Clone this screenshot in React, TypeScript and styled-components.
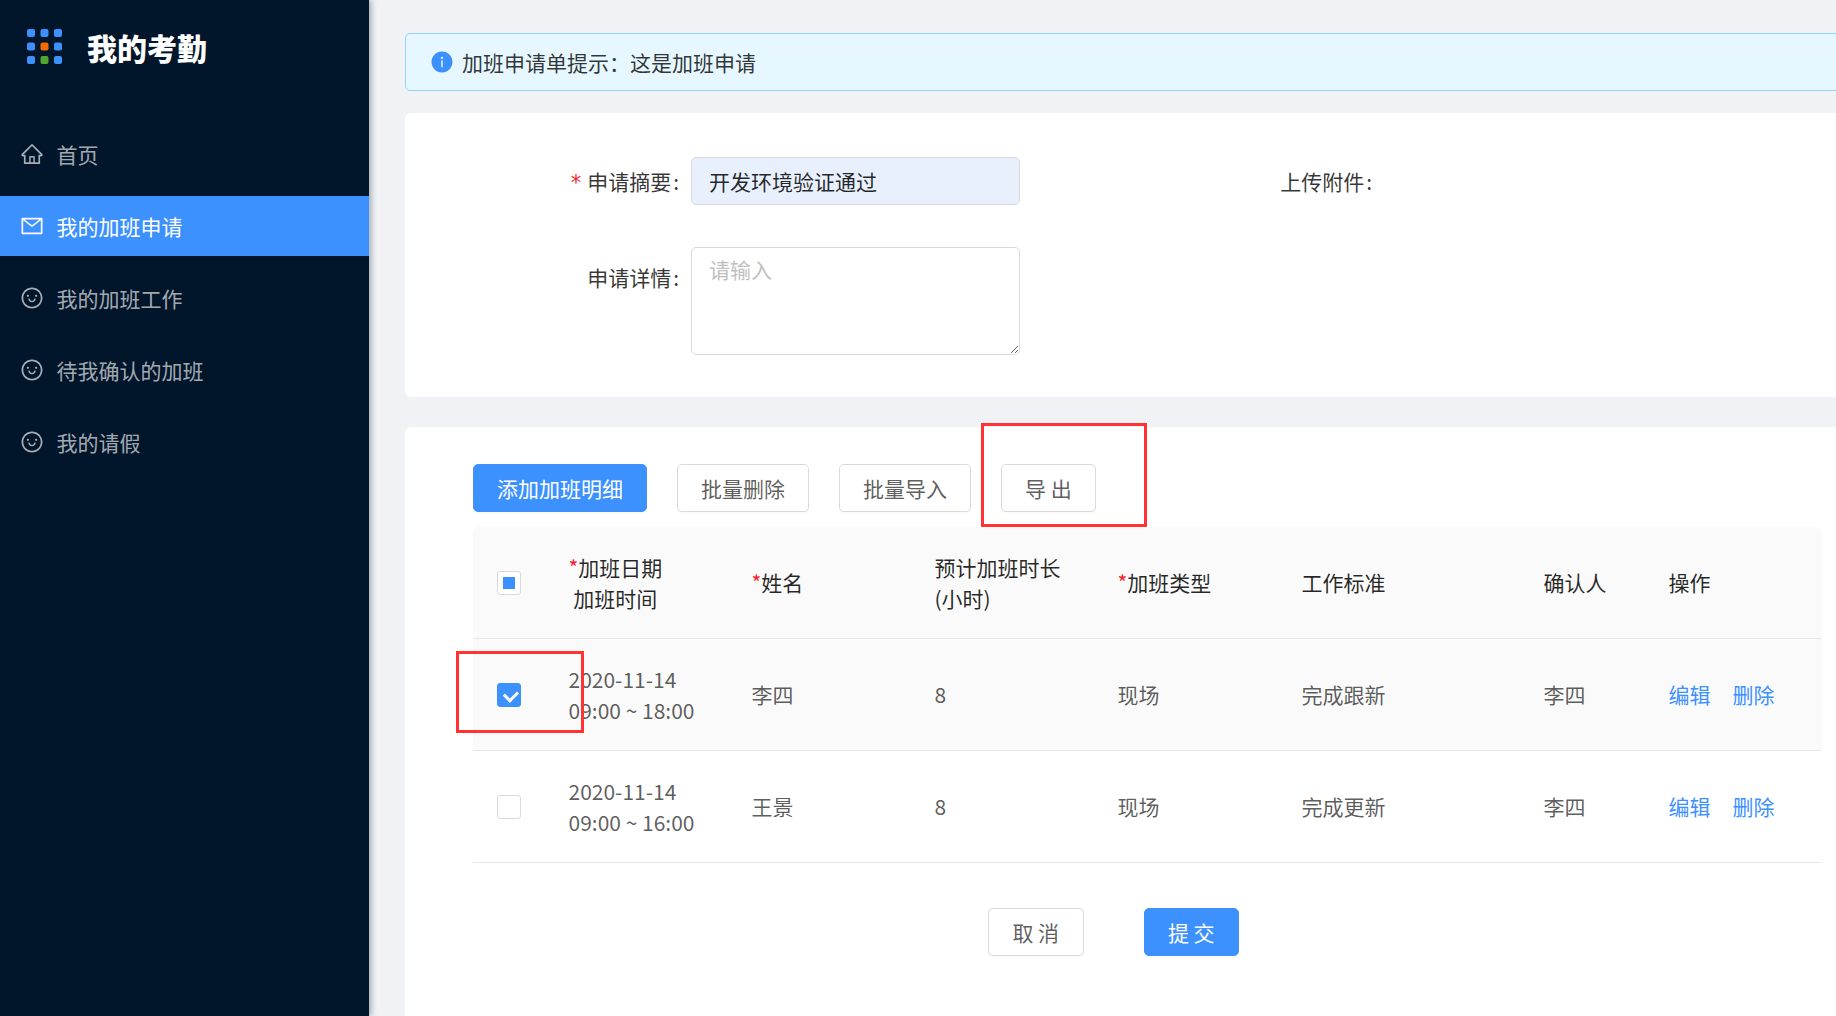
import React from 'react'
import styled, { createGlobalStyle } from 'styled-components'
import { AiOutlineHome, AiOutlineMail, AiOutlineSmile, AiFillInfoCircle } from 'react-icons/ai'

const BLUE = '#3d91ff'

const GlobalStyle = createGlobalStyle`
  html, body {
    margin: 0;
    padding: 0;
    width: 1836px;
    height: 1016px;
    overflow: hidden;
  }
  body {
    font-family: "Noto Sans CJK SC", "Noto Sans", sans-serif;
    font-size: 21px;
    color: rgba(0, 0, 0, 0.65);
  }
  * {
    box-sizing: border-box;
  }
`

const Page = styled.div`
  display: flex;
  width: 1836px;
  height: 1016px;
  overflow: hidden;
  background: #f0f2f5;
`

const Sidebar = styled.aside`
  flex: none;
  width: 369px;
  background: #01152b;
  box-shadow: 2px 0 6px rgba(0, 21, 41, 0.35);
  position: relative;
  z-index: 2;
`

const Brand = styled.div`
  display: flex;
  align-items: center;
  height: 94px;
  padding-left: 27px;
  gap: 24px;
`

const BrandTitle = styled.h1`
  margin: 0;
  font-size: 30px;
  font-weight: 900;
  color: #fff;
  line-height: 40px;
`

const Menu = styled.nav`
  display: flex;
  flex-direction: column;
  gap: 12px;
  margin-top: 30px;
`

const MenuItem = styled.a<{ $active?: boolean }>`
  display: flex;
  align-items: center;
  gap: 13px;
  height: 60px;
  padding-left: 19.5px;
  font-size: 21px;
  color: ${(p) => (p.$active ? '#fff' : 'rgba(255, 255, 255, 0.65)')};
  background: ${(p) => (p.$active ? BLUE : 'transparent')};
`

const Main = styled.main`
  flex: none;
  width: 1520px;
  padding: 33px 0 0 36px;
`

const Alert = styled.div`
  display: flex;
  align-items: center;
  gap: 8px;
  height: 58px;
  padding-left: 24px;
  background: #e6f7ff;
  border: 1px solid #91d5ff;
  border-radius: 5px;
  color: rgba(0, 0, 0, 0.8);
  svg {
    color: ${BLUE};
  }
`

const FormCard = styled.section`
  height: 284px;
  margin-top: 22px;
  padding-top: 44px;
  background: #fff;
  border-radius: 6px;
`

const FormRow = styled.div<{ $gap?: number }>`
  display: flex;
  margin-top: ${(p) => p.$gap ?? 0}px;
`

const Label = styled.label<{ $width: number; $offset?: number }>`
  flex: none;
  width: ${(p) => p.$width}px;
  height: 48px;
  margin-top: ${(p) => p.$offset ?? 0}px;
  padding-right: 12px;
  text-align: right;
  line-height: 48px;
  color: rgba(0, 0, 0, 0.8);
`

const Colon = styled.span`
  margin-left: 2px;
`

const RequiredMark = styled.span`
  margin-right: 6px;
  font-family: "DejaVu Sans", sans-serif;
  line-height: 0;
  color: #f5222d;
`

const TextInput = styled.input`
  flex: none;
  width: 329px;
  height: 48px;
  padding: 0 17px;
  background: #e8f0fe;
  border: 1px solid #d9d9d9;
  border-radius: 5px;
  font: inherit;
  color: rgba(0, 0, 0, 0.85);
  outline: none;
`

const TextArea = styled.textarea`
  flex: none;
  display: block;
  width: 329px;
  height: 108px;
  padding: 6px 17px;
  background: #fff;
  border: 1px solid #d9d9d9;
  border-radius: 5px;
  font: inherit;
  line-height: 31px;
  outline: none;
  &::placeholder {
    color: #bfbfbf;
  }
`

const TableCard = styled.section`
  position: relative;
  min-height: 620px;
  margin-top: 30px;
  padding: 37px 0 0 68px;
  background: #fff;
  border-radius: 6px;
`

const Toolbar = styled.div`
  display: flex;
  gap: 30px;
`

const Button = styled.button<{ $primary?: boolean }>`
  height: 48px;
  padding: 0 23px;
  font: inherit;
  white-space: pre;
  border-radius: 5px;
  border: 1px solid ${(p) => (p.$primary ? BLUE : '#d9d9d9')};
  background: ${(p) => (p.$primary ? BLUE : '#fff')};
  color: ${(p) => (p.$primary ? '#fff' : 'rgba(0, 0, 0, 0.65)')};
  box-shadow: 0 2px 0 rgba(0, 0, 0, 0.015);
`

const FooterButton = styled(Button)`
  width: 95.5px;
  padding: 0;
`

const Table = styled.table`
  width: 1349px;
  margin-top: 15px;
  table-layout: fixed;
  border-collapse: separate;
  border-spacing: 0;
`

const Col = styled.col<{ $width: number }>`
  width: ${(p) => p.$width}px;
`

const HeadCell = styled.th`
  height: 112px;
  padding: 0 0 0 24px;
  background: #fafafa;
  border-bottom: 1px solid #e8e8e8;
  font-weight: 400;
  text-align: left;
  line-height: 31px;
  color: rgba(0, 0, 0, 0.85);
  &:first-child {
    border-top-left-radius: 6px;
  }
  &:last-child {
    border-top-right-radius: 6px;
  }
`

const Row = styled.tr<{ $hover?: boolean }>`
  background: ${(p) => (p.$hover ? '#fafafa' : '#fff')};
`

const Cell = styled.td`
  height: 112px;
  padding: 0 0 0 24px;
  border-bottom: 1px solid #e8e8e8;
  line-height: 31px;
`

const Star = styled.span`
  color: #f5222d;
`

const ActionLink = styled.a`
  margin-right: 22px;
  color: ${BLUE};
`

const Checkbox = styled.span<{ $state?: 'checked' | 'partial' }>`
  position: relative;
  display: block;
  width: 24px;
  height: 24px;
  border-radius: 3px;
  border: 1px solid ${(p) => (p.$state === 'checked' ? BLUE : '#d9d9d9')};
  background: ${(p) => (p.$state === 'checked' ? BLUE : '#fff')};
  &::after {
    content: '';
    position: absolute;
    display: ${(p) => (p.$state ? 'block' : 'none')};
    ${(p) =>
      p.$state === 'checked'
        ? `
      left: 7.5px;
      top: 4.5px;
      width: 6.5px;
      height: 10px;
      border: solid #fff;
      border-width: 0 3px 3px 0;
      transform: rotate(45deg);
    `
        : `
      left: 5px;
      top: 5px;
      width: 12px;
      height: 12px;
      background: ${BLUE};
    `}
  }
`

const Footer = styled.div`
  display: flex;
  justify-content: center;
  gap: 60px;
  width: 1417px;
  margin: 45px 0 0 -68px;
`

const Annotation = styled.div<{ $left: number; $top: number; $w: number; $h: number }>`
  position: absolute;
  left: ${(p) => p.$left}px;
  top: ${(p) => p.$top}px;
  width: ${(p) => p.$w}px;
  height: ${(p) => p.$h}px;
  border: 3px solid #f33;
  pointer-events: none;
`

const colWidths = [71.5, 183, 183, 183, 184, 242, 125, 177.5]

const dots = [0, 1, 2, 3, 4, 5, 6, 7, 8]
const dotColor = (i: number) => (i === 4 ? '#f56a00' : i === 7 ? '#52a62c' : BLUE)

function Logo() {
  return (
    <svg width="36" height="36" viewBox="0 0 36 36">
      {dots.map((i) => (
        <rect
          key={i}
          x={(i % 3) * 13.5}
          y={Math.floor(i / 3) * 13.5}
          width="8"
          height="8"
          rx="2"
          fill={dotColor(i)}
        />
      ))}
    </svg>
  )
}

const rows = [
  { time: '09:00 ~ 18:00', name: '李四', standard: '完成跟新', hover: true, state: 'checked' as const },
  { time: '09:00 ~ 16:00', name: '王景', standard: '完成更新', hover: false, state: undefined },
]

export default function App() {
  return (
    <Page>
      <GlobalStyle />
      <Sidebar>
        <Brand>
          <Logo />
          <BrandTitle>我的考勤</BrandTitle>
        </Brand>
        <Menu>
          <MenuItem>
            <AiOutlineHome size={24} />
            首页
          </MenuItem>
          <MenuItem $active>
            <AiOutlineMail size={24} />
            我的加班申请
          </MenuItem>
          <MenuItem>
            <AiOutlineSmile size={24} />
            我的加班工作
          </MenuItem>
          <MenuItem>
            <AiOutlineSmile size={24} />
            待我确认的加班
          </MenuItem>
          <MenuItem>
            <AiOutlineSmile size={24} />
            我的请假
          </MenuItem>
        </Menu>
      </Sidebar>
      <Main>
        <Alert>
          <AiFillInfoCircle size={24} />
          {'加班申请单提示\uFF1A这是加班申请'}
        </Alert>
        <FormCard>
          <FormRow>
            <Label $width={286}>
              <RequiredMark>*</RequiredMark>申请摘要<Colon>:</Colon>
            </Label>
            <TextInput defaultValue="开发环境验证通过" />
            <Label $width={364}>
              上传附件<Colon>:</Colon>
            </Label>
          </FormRow>
          <FormRow $gap={42}>
            <Label $width={286} $offset={6}>
              申请详情<Colon>:</Colon>
            </Label>
            <TextArea placeholder="请输入" />
          </FormRow>
        </FormCard>
        <TableCard>
          <Toolbar>
            <Button $primary>添加加班明细</Button>
            <Button>批量删除</Button>
            <Button>批量导入</Button>
            <Button>导 出</Button>
          </Toolbar>
          <Table>
            <colgroup>
              {colWidths.map((w, i) => (
                <Col key={i} $width={w} />
              ))}
            </colgroup>
            <thead>
              <tr>
                <HeadCell>
                  <Checkbox $state="partial" />
                </HeadCell>
                <HeadCell>
                  <Star>*</Star>加班日期
                  <br />
                  &nbsp;加班时间
                </HeadCell>
                <HeadCell>
                  <Star>*</Star>姓名
                </HeadCell>
                <HeadCell>
                  预计加班时长
                  <br />
                  (小时)
                </HeadCell>
                <HeadCell>
                  <Star>*</Star>加班类型
                </HeadCell>
                <HeadCell>工作标准</HeadCell>
                <HeadCell>确认人</HeadCell>
                <HeadCell>操作</HeadCell>
              </tr>
            </thead>
            <tbody>
              {rows.map((r) => (
                <Row key={r.name} $hover={r.hover}>
                  <Cell>
                    <Checkbox $state={r.state} />
                  </Cell>
                  <Cell>
                    2020-11-14
                    <br />
                    {r.time}
                  </Cell>
                  <Cell>{r.name}</Cell>
                  <Cell>8</Cell>
                  <Cell>现场</Cell>
                  <Cell>{r.standard}</Cell>
                  <Cell>李四</Cell>
                  <Cell>
                    <ActionLink>编辑</ActionLink>
                    <ActionLink>删除</ActionLink>
                  </Cell>
                </Row>
              ))}
            </tbody>
          </Table>
          <Footer>
            <FooterButton>取 消</FooterButton>
            <FooterButton $primary>提 交</FooterButton>
          </Footer>
          <Annotation $left={576} $top={-4} $w={166} $h={104} />
          <Annotation $left={51} $top={224} $w={128} $h={82} />
        </TableCard>
      </Main>
    </Page>
  )
}
